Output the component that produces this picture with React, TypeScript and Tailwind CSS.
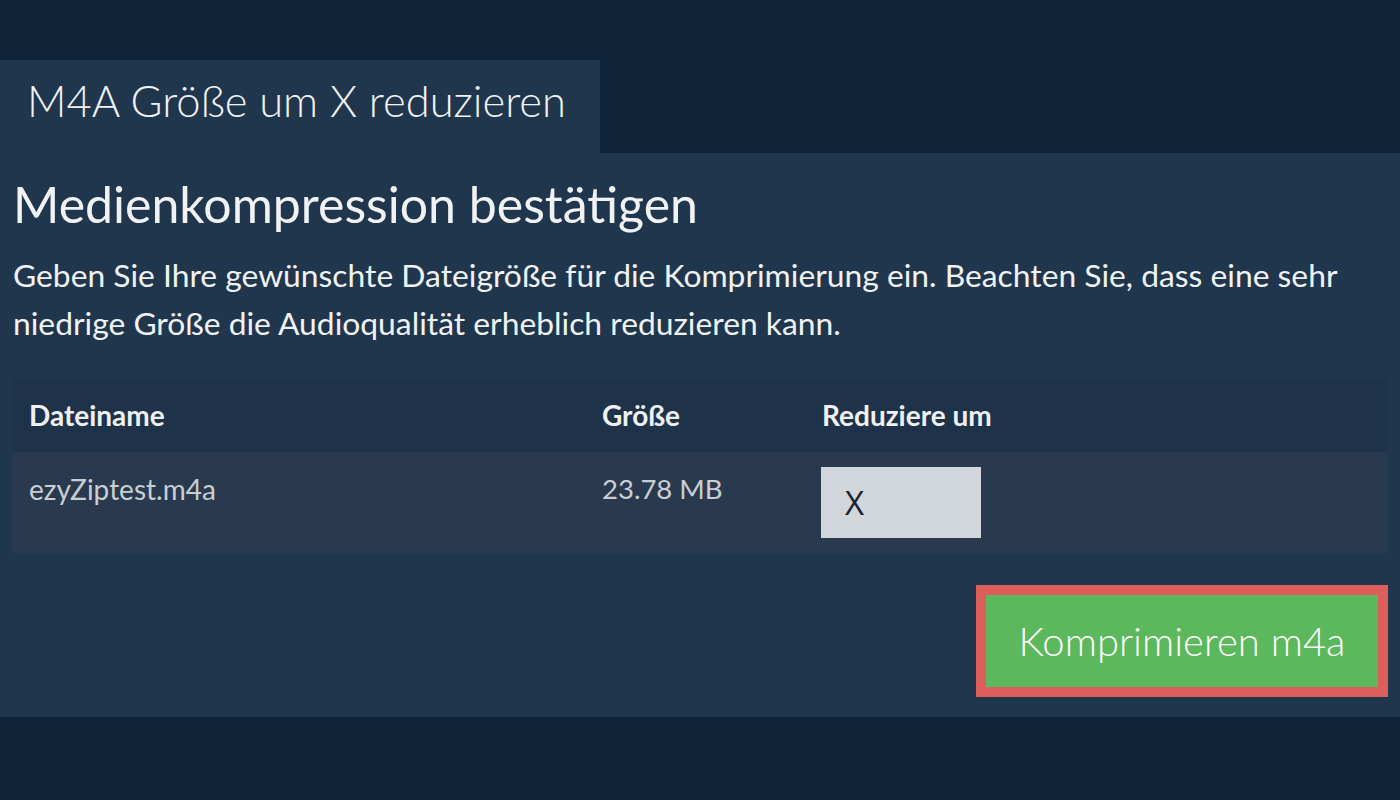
export default function App() {
  return (
    <div
      className="min-h-[800px] w-full bg-[#0f2339] pt-[60px] text-[#eef0f2]"
      style={{ fontFamily: "Lato, 'Open Sans', sans-serif" }}
    >
      {/* tab */}
      <div className="flex">
        <div className="w-[600px] h-[93px] bg-[#20364d] pl-[27px] pt-[14px]">
          <h1 className="text-[43.5px] font-light leading-[52px] text-[#f0f2f4]">M4A Größe um X reduzieren</h1>
        </div>
      </div>

      {/* panel */}
      <div className="bg-[#20364d] px-[12px] pt-[21px] pb-[20px] h-[564px]">
        <h2 className="text-[50px] leading-[60px] font-normal pl-[1px] text-[#f0f2f4]">Medienkompression bestätigen</h2>
        <p className="mt-[17px] text-[31.8px] leading-[48px] pl-[1px] text-[#f0f2f4]">
          Geben Sie Ihre gewünschte Dateigröße für die Komprimierung ein. Beachten Sie, dass eine sehr niedrige Größe die Audioqualität erheblich reduzieren kann.
        </p>

        <table className="mt-[31px] w-[1376px] border-collapse text-left">
          <thead>
            <tr className="bg-[#1e3349] h-[74px]">
              <th className="w-[573px] pl-[17px] text-[28px] font-bold">Dateiname</th>
              <th className="w-[220px] pl-[17px] text-[28px] font-bold">Größe</th>
              <th className="pl-[17px] text-[28px] font-bold">Reduziere um</th>
            </tr>
          </thead>
          <tbody>
            <tr className="bg-[#2a3a4e] h-[101px] align-top">
              <td className="pl-[17px] pt-[20px] text-[28px] leading-[34px] text-[#c9ced4]">ezyZiptest.m4a</td>
              <td className="pl-[17px] pt-[20px] text-[27.5px] leading-[34px] text-[#c9ced4]">23.78 MB</td>
              <td className="pl-[16px] pt-[15px]">
                <div className="w-[160px] h-[71px] bg-[#d1d6db] flex items-center pl-[24px] pt-[1px] text-[33px] text-[#1b2430]" style={{ fontFamily: "'Open Sans', sans-serif" }}>
                  X
                </div>
              </td>
            </tr>
          </tbody>
        </table>

        <div className="flex justify-end mt-[32px] w-[1376px]">
          <button className="w-[412px] h-[112px] border-[10px] border-[#dc5f5b] bg-[#5cb85c] text-[40px] font-light text-white">
            Komprimieren m4a
          </button>
        </div>
      </div>
    </div>
  )
}
